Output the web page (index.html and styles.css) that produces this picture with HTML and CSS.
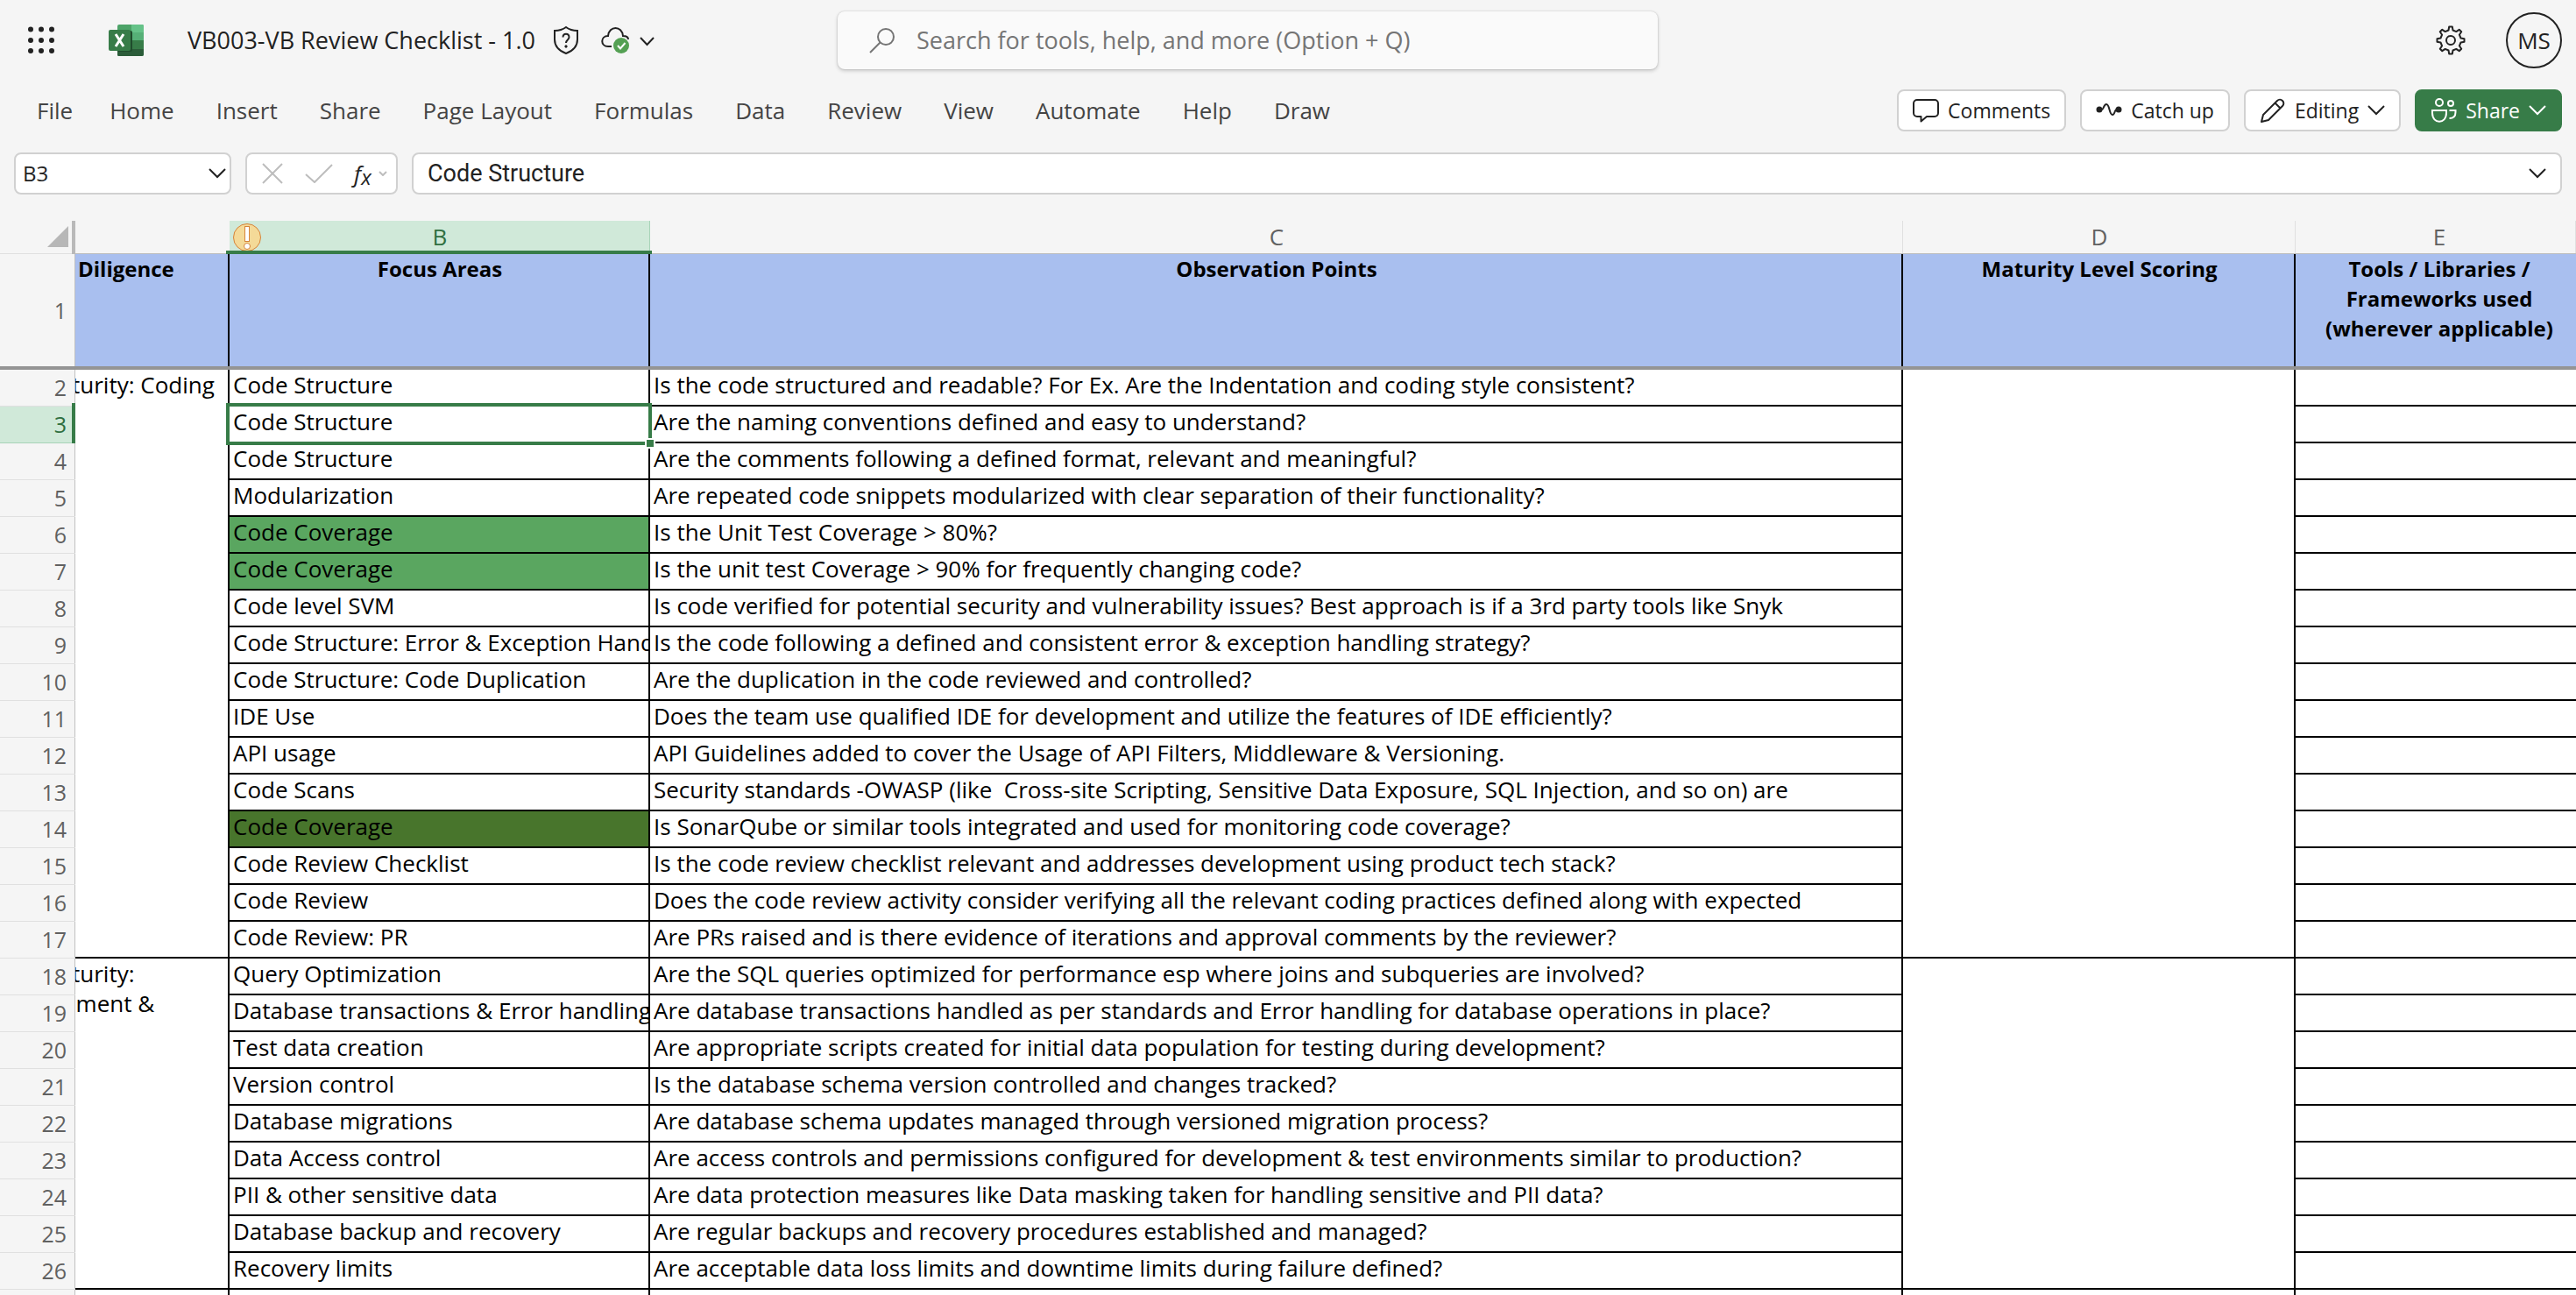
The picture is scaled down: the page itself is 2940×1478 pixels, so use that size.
FILE: index.html
```html
<!DOCTYPE html>
<html lang="en">
<head>
<meta charset="utf-8">
<title>VB003-VB Review Checklist - 1.0</title>
<link rel="stylesheet" href="styles.css">
</head>
<body>
<header class="titlebar">
  <div class="doc">
    <button class="icon-btn" aria-label="App launcher"><svg width="30" height="32" viewBox="0 0 30 32" fill="#222"><circle cx="3" cy="3.500" r="3"/><circle cx="15" cy="3.500" r="3"/><circle cx="27" cy="3.500" r="3"/><circle cx="3" cy="16" r="3"/><circle cx="15" cy="16" r="3"/><circle cx="27" cy="16" r="3"/><circle cx="3" cy="28" r="3"/><circle cx="15" cy="28" r="3"/><circle cx="27" cy="28" r="3"/></svg></button>
    <svg class="excel" width="40" height="36" viewBox="0 0 40 36"><rect x="10" y="0" width="30" height="36" rx="2" fill="#4da368"/><path d="M26 0h12a2 2 0 0 1 2 2v7H26z" fill="#65c288"/><path d="M10 9h16v9H10z" fill="#4da368"/><path d="M26 9h14v9H26z" fill="#56b077"/><path d="M26 18h14v10H26z" fill="#377c48"/><path d="M10 18h16v18H12a2 2 0 0 1-2-2z" fill="#2e6a3f"/><path d="M10 28h30v6a2 2 0 0 1-2 2H12a2 2 0 0 1-2-2z" fill="#2b5c39"/><path d="M10 7h15a2 2 0 0 1 2 2v20a2 2 0 0 1-2 2H10z" fill="#1f4c2c"/><rect x="0" y="6" width="25" height="24" rx="2" fill="#377c48"/><path d="M8 11l9 14M17 11l-9 14" stroke="#fff" stroke-width="3" fill="none"/></svg>
    <h1 class="doc-name">VB003-VB Review Checklist - 1.0</h1>
    <button class="icon-btn shield" aria-label="Sensitivity"><svg width="30" height="34" viewBox="0 0 30 34" fill="none" stroke="#222" stroke-width="2"><path d="M15 2c4 3 8 4 13 4v10c0 8-5 13-13 16C7 29 2 24 2 16V6c5 0 9-1 13-4z"/><path d="M11.500 13.500c0-5 7-5 7 0 0 3-3.500 3-3.500 6.500"/><circle cx="15" cy="24" r="1.200" fill="#222" stroke-width="1"/></svg></button>
    <button class="icon-btn cloud" aria-label="Saved"><svg width="62" height="34" viewBox="0 0 62 34" fill="none" stroke="#222" stroke-width="2"><path d="M13 24H9c-9 0-9-12 0-12C10 0 25 0 26 12c4 0 6 2 6 4"/><circle cx="24" cy="23" r="9" fill="#54a053" stroke="none"/><path d="M20 23l3 3.500 5.500-6.500" stroke="#fff"/><path d="M46 14l7.500 8 7.500-8"/></svg></button>
  </div>
  <label class="search"><svg width="30" height="30" viewBox="0 0 30 30" fill="none" stroke="#757575" stroke-width="2"><circle cx="19" cy="11" r="9"/><path d="M12.500 17.500L1 29"/></svg><input type="search" placeholder="Search for tools, help, and more (Option + Q)" aria-label="Search"></label>
  <div class="account">
    <button class="icon-btn" aria-label="Settings"><svg width="34" height="34" viewBox="0 0 34 34" fill="none" stroke="#222" stroke-width="2" stroke-linejoin="round"><path d="M14.500 5.500L15.200 1.500 18.800 1.500 19.500 5.500 23.300 7.100 26.700 4.800 29.200 7.300 26.900 10.700 28.500 14.500 32.500 15.200 32.500 18.800 28.500 19.500 26.900 23.300 29.200 26.700 26.700 29.200 23.300 26.900 19.500 28.500 18.800 32.500 15.200 32.500 14.500 28.500 10.700 26.900 7.300 29.200 4.800 26.700 7.100 23.300 5.500 19.500 1.500 18.800 1.500 15.200 5.500 14.500 7.100 10.700 4.800 7.300 7.300 4.800 10.700 7.100z"/><circle cx="17" cy="17" r="5"/></svg></button>
    <button class="avatar">MS</button>
  </div>
</header>
<div class="ribbon">
  <nav class="tabs" aria-label="Ribbon">
    <button>File</button><button>Home</button><button>Insert</button><button>Share</button><button>Page Layout</button><button>Formulas</button><button>Data</button><button>Review</button><button>View</button><button>Automate</button><button>Help</button><button>Draw</button>
  </nav>
  <div class="actions">
    <button class="action"><svg width="30" height="28" viewBox="0 0 30 28" fill="none" stroke="#222" stroke-width="2" stroke-linejoin="round"><path d="M5 2h20a4 4 0 0 1 4 4v11a4 4 0 0 1-4 4H16l-6.500 5.500V21H5a4 4 0 0 1-4-4V6a4 4 0 0 1 4-4z"/></svg>Comments</button>
    <button class="action"><svg width="30" height="28" viewBox="0 0 30 28" fill="none" stroke="#222" stroke-width="2" stroke-linejoin="round"><circle cx="4" cy="13" r="2.500" fill="#222"/><path d="M4 13h3c2 0 2-6 5-6 4 0 3 12 7 12 3 0 2-6 5-6h2"/><circle cx="26" cy="13" r="2.500" fill="#222"/></svg>Catch up</button>
    <button class="action"><svg width="30" height="28" viewBox="0 0 30 28" fill="none" stroke="#222" stroke-width="2" stroke-linejoin="round"><path d="M2 27l2-8L20 3c4-4 10 2 6 6L10 25zM17.500 5.500l6 6"/></svg>Editing<svg width="20" height="12" viewBox="0 0 20 12" fill="none" stroke="#222" stroke-width="2"><path d="M1 1l9 9 9-9"/></svg></button>
    <button class="action share"><svg width="30" height="28" viewBox="0 0 30 28" fill="none" stroke="#fff" stroke-width="2"><circle cx="10" cy="5" r="4"/><circle cx="23" cy="6" r="3"/><path d="M2 14h16v3c0 13-16 13-16 0zM21.500 14h7v2c0 5-3 7-7 7"/></svg>Share<svg width="20" height="12" viewBox="0 0 20 12" fill="none" stroke="#fff" stroke-width="2"><path d="M1 1l9 9 9-9"/></svg></button>
  </div>
</div>
<div class="formula-row">
  <div class="box name-box"><input type="text" value="B3" aria-label="Name box"><svg width="20" height="12" viewBox="0 0 20 12" fill="none" stroke="#222" stroke-width="2"><path d="M1 1l9 9 9-9"/></svg></div>
  <div class="box fx-box">
    <button class="icon-btn" aria-label="Cancel"><svg width="26" height="24" viewBox="0 0 26 24" fill="none" stroke="#bdbdbd" stroke-width="2"><path d="M2 1l22 22M24 1L2 23"/></svg></button>
    <button class="icon-btn" aria-label="Enter"><svg width="32" height="22" viewBox="0 0 32 22" fill="none" stroke="#bdbdbd" stroke-width="2"><path d="M1 12l10 9L31 1"/></svg></button>
    <button class="icon-btn fx" aria-label="Insert function"><i>f</i><sub>x</sub><svg width="10" height="6" viewBox="0 0 10 6" fill="none" stroke="#bdbdbd" stroke-width="2"><path d="M1 1l4 4 4-4"/></svg></button>
  </div>
  <div class="box formula"><input type="text" value="Code Structure" aria-label="Formula bar"><svg width="20" height="12" viewBox="0 0 20 12" fill="none" stroke="#222" stroke-width="2"><path d="M1 1l9 9 9-9"/></svg></div>
</div>
<main class="grid">
<table class="sheet">
  <colgroup><col class="c-num"><col class="c-a"><col class="c-b"><col class="c-c"><col class="c-d"><col></colgroup>
  <thead>
    <tr class="letters">
      <th class="corner"><svg width="24" height="24" viewBox="0 0 24 24" fill="#b7b7b7"><path d="M24 0v24H0z"/></svg></th>
      <th></th>
      <th class="on"><svg class="warn" width="34" height="34" viewBox="0 0 34 34" stroke="#d5843a" stroke-width="1"><circle cx="17" cy="17" r="15.500" fill="#f4da98"/><rect x="14.500" y="4.500" width="5" height="17" fill="#fff"/><circle cx="17" cy="27" r="3.500" fill="#fff"/></svg>B</th>
      <th>C</th><th>D</th><th class="e">E</th>
    </tr>
    <tr class="titles">
      <th class="num">1</th><th class="a">Diligence</th><th>Focus Areas</th><th>Observation Points</th><th>Maturity Level Scoring</th><th class="e">Tools / Libraries /<br>Frameworks used<br>(wherever applicable)</th>
    </tr>
  </thead>
  <tbody>
    <tr><th class="num">2</th><td class="a" rowspan="16"><div>turity: Coding</div></td><td><div>Code Structure</div></td><td><div>Is the code structured and readable? For Ex. Are the Indentation and coding style consistent?</div></td><td rowspan="16"></td><td class="e"></td></tr>
    <tr><th class="num on">3</th><td class="selected"><div>Code Structure</div><span class="handle"></span></td><td><div>Are the naming conventions defined and easy to understand?</div></td><td class="e"></td></tr>
    <tr><th class="num">4</th><td><div>Code Structure</div></td><td><div>Are the comments following a defined format, relevant and meaningful?</div></td><td class="e"></td></tr>
    <tr><th class="num">5</th><td><div>Modularization</div></td><td><div>Are repeated code snippets modularized with clear separation of their functionality?</div></td><td class="e"></td></tr>
    <tr><th class="num">6</th><td class="green"><div>Code Coverage</div></td><td><div>Is the Unit Test Coverage &gt; 80%?</div></td><td class="e"></td></tr>
    <tr><th class="num">7</th><td class="green"><div>Code Coverage</div></td><td><div>Is the unit test Coverage &gt; 90% for frequently changing code?</div></td><td class="e"></td></tr>
    <tr><th class="num">8</th><td><div>Code level SVM</div></td><td><div>Is code verified for potential security and vulnerability issues? Best approach is if a 3rd party tools like Snyk</div></td><td class="e"></td></tr>
    <tr><th class="num">9</th><td><div>Code Structure: Error &amp; Exception Handling</div></td><td><div>Is the code following a defined and consistent error &amp; exception handling strategy?</div></td><td class="e"></td></tr>
    <tr><th class="num">10</th><td><div>Code Structure: Code Duplication</div></td><td><div>Are the duplication in the code reviewed and controlled?</div></td><td class="e"></td></tr>
    <tr><th class="num">11</th><td><div>IDE Use</div></td><td><div>Does the team use qualified IDE for development and utilize the features of IDE efficiently?</div></td><td class="e"></td></tr>
    <tr><th class="num">12</th><td><div>API usage</div></td><td><div>API Guidelines added to cover the Usage of API Filters, Middleware &amp; Versioning.</div></td><td class="e"></td></tr>
    <tr><th class="num">13</th><td><div>Code Scans</div></td><td><div>Security standards -OWASP (like  Cross-site Scripting, Sensitive Data Exposure, SQL Injection, and so on) are</div></td><td class="e"></td></tr>
    <tr><th class="num">14</th><td class="dark"><div>Code Coverage</div></td><td><div>Is SonarQube or similar tools integrated and used for monitoring code coverage?</div></td><td class="e"></td></tr>
    <tr><th class="num">15</th><td><div>Code Review Checklist</div></td><td><div>Is the code review checklist relevant and addresses development using product tech stack?</div></td><td class="e"></td></tr>
    <tr><th class="num">16</th><td><div>Code Review</div></td><td><div>Does the code review activity consider verifying all the relevant coding practices defined along with expected</div></td><td class="e"></td></tr>
    <tr><th class="num">17</th><td><div>Code Review: PR</div></td><td><div>Are PRs raised and is there evidence of iterations and approval comments by the reviewer?</div></td><td class="e"></td></tr>
    <tr><th class="num">18</th><td class="a" rowspan="9"><div>turity:</div><div class="wrapped">ement &amp;</div></td><td><div>Query Optimization</div></td><td><div>Are the SQL queries optimized for performance esp where joins and subqueries are involved?</div></td><td rowspan="9"></td><td class="e"></td></tr>
    <tr><th class="num">19</th><td><div>Database transactions &amp; Error handling</div></td><td><div>Are database transactions handled as per standards and Error handling for database operations in place?</div></td><td class="e"></td></tr>
    <tr><th class="num">20</th><td><div>Test data creation</div></td><td><div>Are appropriate scripts created for initial data population for testing during development?</div></td><td class="e"></td></tr>
    <tr><th class="num">21</th><td><div>Version control</div></td><td><div>Is the database schema version controlled and changes tracked?</div></td><td class="e"></td></tr>
    <tr><th class="num">22</th><td><div>Database migrations</div></td><td><div>Are database schema updates managed through versioned migration process?</div></td><td class="e"></td></tr>
    <tr><th class="num">23</th><td><div>Data Access control</div></td><td><div>Are access controls and permissions configured for development &amp; test environments similar to production?</div></td><td class="e"></td></tr>
    <tr><th class="num">24</th><td><div>PII &amp; other sensitive data</div></td><td><div>Are data protection measures like Data masking taken for handling sensitive and PII data?</div></td><td class="e"></td></tr>
    <tr><th class="num">25</th><td><div>Database backup and recovery</div></td><td><div>Are regular backups and recovery procedures established and managed?</div></td><td class="e"></td></tr>
    <tr><th class="num">26</th><td><div>Recovery limits</div></td><td><div>Are acceptable data loss limits and downtime limits during failure defined?</div></td><td class="e"></td></tr>
    <tr><th class="num"></th><td></td><td></td><td></td><td></td><td class="e"></td></tr>
  </tbody>
</table>
</main>
</body>
</html>
```
FILE: styles.css
```css
* { box-sizing: border-box; }
body {
  margin: 0;
  height: 100vh;
  display: flex;
  flex-direction: column;
  overflow: hidden;
  background: #f5f5f5;
  color: #222;
  font: 26px/36px "Open Sans", sans-serif;
}
button, input { font: inherit; color: inherit; border: 0; background: none; padding: 0; margin: 0; }
input { outline: 0; min-width: 0; flex: 1; }
svg { display: block; flex: none; }

.titlebar {
  display: grid;
  grid-template-columns: 956px minmax(300px, 936px) 1fr;
  align-items: center;
  height: 92px;
}
.doc { display: flex; align-items: center; padding-left: 32px; }
.excel { margin-left: 62px; }
.doc-name { margin: 0 0 0 50px; font-size: 27px; font-weight: 400; white-space: nowrap; }
.shield { margin-left: 20px; }
.cloud { margin-left: 24px; }
.search {
  display: flex;
  align-items: center;
  gap: 24px;
  height: 66px;
  padding: 0 36px;
  background: #fafafa;
  border-radius: 8px;
  font-size: 27px;
  box-shadow: 0 0 2px rgba(0, 0, 0, .2), 0 2px 4px rgba(0, 0, 0, .18);
}
.search input::placeholder { color: #757575; opacity: 1; }
.account { display: flex; align-items: center; justify-content: flex-end; gap: 46px; padding-right: 16px; }
.avatar { width: 64px; height: 64px; border: 2px solid #222; border-radius: 50%; font-size: 26px; }

.ribbon { display: flex; justify-content: space-between; align-items: center; height: 70px; padding: 0 16px 2px 18px; }
.tabs { display: flex; color: #444; }
.tabs button { padding: 0 24px; white-space: nowrap; }
.tabs button:first-child { padding-right: 18px; }
.actions { display: flex; gap: 16px; }
.action {
  display: flex;
  align-items: center;
  gap: 10px;
  height: 48px;
  padding: 0 16px;
  background: #fff;
  border: 2px solid #d1d1d1;
  border-radius: 8px;
  font-size: 23px;
  white-space: nowrap;
}
.action.share { background: #377c48; border-color: #377c48; color: #fff; }

.formula-row { display: flex; gap: 16px; padding: 12px 16px 30px; }
.box { display: flex; align-items: center; height: 48px; background: #fff; border: 2px solid #d1d1d1; border-radius: 8px; }
.name-box { width: 248px; padding: 0 4px 0 8px; font-size: 24px; }
.fx-box { width: 174px; padding: 0 6px 0 16px; gap: 24px; }
.fx { display: flex; align-items: center; }
.fx sub { padding-top: 8px; font-size: 24px; font-style: italic; }
.fx svg { margin-left: 8px; }
.formula { flex: 1; padding: 0 16px; font: 27px/36px Roboto, sans-serif; }

.grid { flex: 1; min-height: 0; overflow: hidden; }
.sheet { width: 100%; table-layout: fixed; border-spacing: 0; }
.c-num { width: 86px; }
.c-a { width: 176px; }
.c-b { width: 480px; }
.c-c { width: 1430px; }
.c-d { width: 448px; }
th, td { padding: 0; position: relative; vertical-align: top; }
.letters th {
  height: 38px;
  font-weight: 400;
  line-height: 36px;
  color: #616161;
  border-bottom: 1px solid #bdbdbd;
  box-shadow: inset -1px 0 #e0e0e0;
}
.letters th:nth-child(2) { box-shadow: none; }
.letters .corner { border-bottom-color: #e0e0e0; box-shadow: none; }
.corner svg { position: absolute; left: 54px; top: 6px; }
.corner::after { content: ""; position: absolute; right: 0; top: -22px; bottom: -1px; width: 4px; background: #b9b9b9; }
.letters .on { background: #d0e9d9; color: #2f6f40; box-shadow: inset -1px 0 #a8d3b8; }
.letters .on::after { content: ""; position: absolute; left: -4px; right: -2px; bottom: -1px; height: 4px; background: #377c48; z-index: 1; }
.warn { position: absolute; left: 3px; top: 2px; }
th.e, td.e { padding-left: 8px; }

.titles th {
  height: 132px;
  background: #a9bfef;
  border-bottom: 4px solid #949494;
  box-shadow: inset -2px 0 #000;
  color: #000;
  font: bold 24px/34px "Open Sans", sans-serif;
}
.titles .a { text-align: left; padding-left: 3px; }
.titles .e { box-shadow: none; }

tbody td {
  height: 42px;
  background: #fff;
  border-bottom: 2px solid #000;
  box-shadow: inset -2px 0 #000;
  color: #000;
  font: 26px/34px "Open Sans", sans-serif;
}
td.e { box-shadow: none; }
td div { padding-left: 4px; overflow: hidden; white-space: pre; }
.a div { padding-left: 0; text-indent: -4px; }
.a .wrapped { text-indent: -14px; }
td.green { background: #5aa660; }
td.dark { background: #48752c; }

.sheet .num {
  height: 42px;
  padding: 0 10px 4px 0;
  text-align: right;
  background: #f5f5f5;
  color: #616161;
  font: 25px/34px "Open Sans", sans-serif;
  vertical-align: bottom;
  border-bottom: 1px solid #e0e0e0;
  box-shadow: inset -1px 0 #c0c0c0;
}
.sheet .titles .num { vertical-align: middle; padding-bottom: 0; border-bottom: 4px solid #949494; }
.sheet .num.on { background: #d0e9d9; color: #2f6f40; border-bottom-color: #a8d3b8; }
.num.on::after { content: ""; position: absolute; right: 0; top: -4px; bottom: -3px; width: 4px; background: #377c48; }
.selected::after { content: ""; position: absolute; left: -4px; right: -2px; top: -4px; bottom: -4px; border: 4px solid #377c48; z-index: 1; }
.handle { position: absolute; right: -6px; bottom: -8px; width: 12px; height: 12px; background: #377c48; border: 2px solid #fff; z-index: 2; }
```
